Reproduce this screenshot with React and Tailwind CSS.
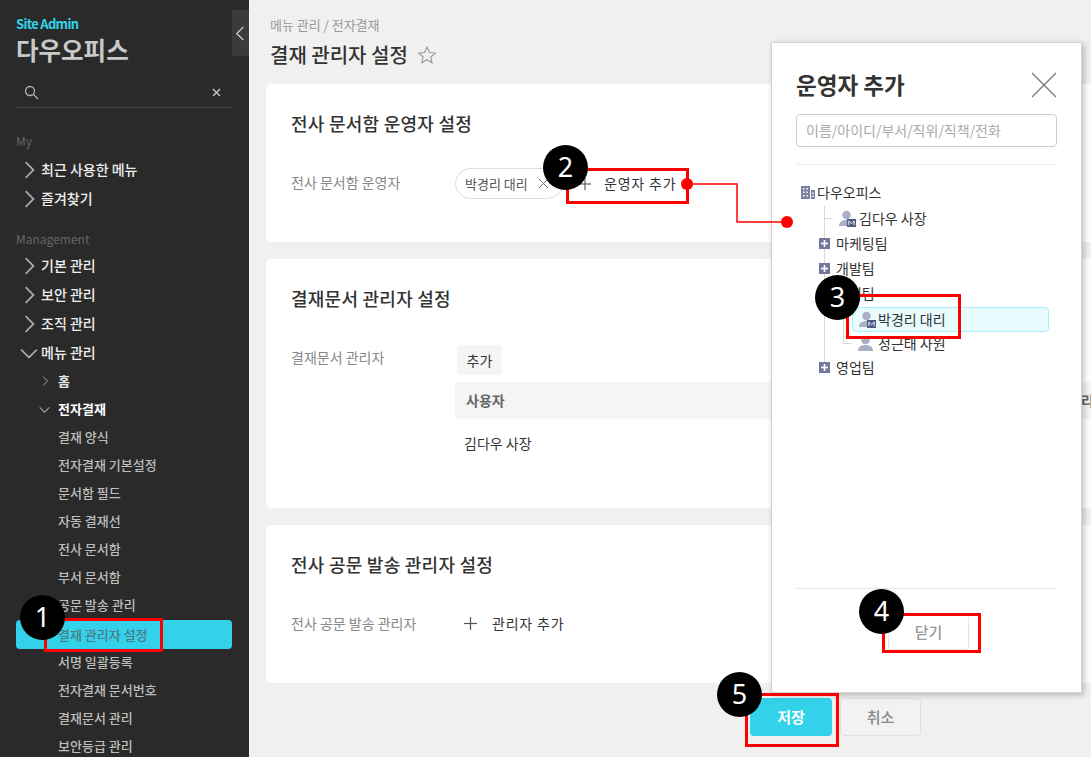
import React from "react";

const FONT = '"Noto Sans CJK KR","Noto Sans",sans-serif';

function Chev({ dir = "right", className = "", size = 16, sw = 1.6 }) {
  const pts = { right: "5,1 12,8 5,15", left: "11,1 4,8 11,15", down: "1,5 8,12 15,5" }[dir];
  return (
    <svg width={size} height={size} viewBox="0 0 16 16" fill="none" stroke="currentColor" strokeWidth={sw} className={className}>
      <polyline points={pts} />
    </svg>
  );
}

function TopItem({ label, open }) {
  return (
    <div className="h-[29px] flex items-center text-[14px] font-medium text-[#eeeeee]">
      <span className="w-[25px] pl-[1px] flex justify-center text-[#a8a8a8]">
        <Chev dir={open ? "down" : "right"} size={18} />
      </span>
      <span>{label}</span>
    </div>
  );
}

function SubItem({ label, active }) {
  return (
    <div className={active
      ? "h-[29px] mt-[1px] -mb-[1px] pl-[42px] w-[216px] rounded-[4px] bg-[#33d2ea] flex items-center text-[13px] font-medium text-[#4e7a85]"
      : "h-[28px] pl-[42px] flex items-center text-[13px] font-medium text-[#bdbdbd]"}>
      {label}
    </div>
  );
}

function Sidebar() {
  const subs = ["결재 양식", "전자결재 기본설정", "문서함 필드", "자동 결재선", "전사 문서함", "부서 문서함", "공문 발송 관리"];
  const subs2 = ["서명 일괄등록", "전자결재 문서번호", "결재문서 관리", "보안등급 관리"];
  return (
    <aside className="relative w-[250px] shrink-0 h-[757px] overflow-hidden bg-[#2a2a2a] pl-[16px] border-r border-[#f7f7f7]">
      <button className="absolute left-[232px] top-[10px] w-[17px] h-[46px] bg-[#3b3b3b] flex items-center justify-center text-[#c8c8c8]">
        <Chev dir="left" size={15} sw={1.4} />
      </button>
      <div className="pt-[14px] h-[20px] box-content text-[13px] leading-[20px] font-bold tracking-[-0.7px] text-[#33d2ea]">Site Admin</div>
      <div className="-mt-[1px] h-[34px] leading-[34px] text-[24.5px] font-bold text-[#c9c9c9]">다우오피스</div>
      <div className="mt-[17px] w-[216px] h-[24px] border-b border-[#484848] relative flex items-center justify-between px-[8px] pb-[6px] text-[#b0b0b0]">
        <svg width="15" height="15" viewBox="0 0 15 15" fill="none" stroke="currentColor" strokeWidth="1.3">
          <circle cx="6" cy="6" r="4.5" />
          <line x1="9.5" y1="9.5" x2="14" y2="14" />
        </svg>
        <svg width="9" height="9" viewBox="0 0 9 9" fill="none" stroke="#d0d0d0" strokeWidth="1.3" className="mr-[3px]">
          <line x1="1" y1="1" x2="8" y2="8" />
          <line x1="8" y1="1" x2="1" y2="8" />
        </svg>
      </div>
      <div className="mt-[24px] h-[18px] leading-[18px] text-[12px] text-[#666666]">My</div>
      <div className="mt-[5px]">
        <TopItem label="최근 사용한 메뉴" />
        <TopItem label="즐겨찾기" />
      </div>
      <div className="mt-[17px] h-[18px] leading-[18px] text-[12px] text-[#666666]">Management</div>
      <div className="mt-[3px]">
        <TopItem label="기본 관리" />
        <TopItem label="보안 관리" />
        <TopItem label="조직 관리" />
        <TopItem label="메뉴 관리" open />
      </div>
      <div>
        <div className="h-[28px] flex items-center text-[13px] font-bold text-[#e8e8e8]">
          <span className="w-[42px] pl-[24px] text-[#a0a0a0]"><Chev dir="right" size={10} /></span>홈
        </div>
        <div className="h-[28px] flex items-center text-[13px] font-bold text-[#ffffff]">
          <span className="w-[42px] pl-[23px] text-[#a0a0a0]"><Chev dir="down" size={11} /></span>전자결재
        </div>
        {subs.map((s) => <SubItem key={s} label={s} />)}
        <SubItem label="결재 관리자 설정" active />
        {subs2.map((s) => <SubItem key={s} label={s} />)}
      </div>
    </aside>
  );
}

function Plus({ size = 13 }) {
  return (
    <svg width={size} height={size} viewBox="0 0 13 13" stroke="#555" strokeWidth="1.2">
      <line x1="6.5" y1="0" x2="6.5" y2="13" />
      <line x1="0" y1="6.5" x2="13" y2="6.5" />
    </svg>
  );
}

function Card({ h, title, children }) {
  return (
    <section className={`w-[900px] bg-white rounded-[5px] pl-[25px] ${h}`}>
      {title}
      {children}
    </section>
  );
}

function Heading({ children }) {
  return <h2 className="pt-[26px] h-[51px] box-content leading-[26px] text-[18px] tracking-[0.25px] font-medium text-[#333333]">{children}</h2>;
}

function Main() {
  return (
    <main className="flex-1 h-[757px] overflow-hidden bg-[#f0f0f0] pl-[16px]">
      <div className="pt-[15px] h-[20px] box-content pl-[4px] leading-[20px] text-[13px] text-[#999999]">메뉴 관리 / 전자결재</div>
      <div className="mt-[6px] h-[28px] pl-[4px] flex items-center gap-[9px]">
        <span className="text-[20px] font-medium text-[#333333]">결재 관리자 설정</span>
        <svg width="20" height="20" viewBox="0 0 24 24" fill="none" stroke="#999" strokeWidth="1.3"><polygon points="12,2.5 14.9,9 22,9.7 16.6,14.4 18.2,21.4 12,17.7 5.8,21.4 7.4,14.4 2,9.7 9.1,9" /></svg>
      </div>
      <div className="mt-[15px] flex flex-col gap-[17px]">
        <Card h="h-[158px]" title={<Heading>전사 문서함 운영자 설정</Heading>}>
          <div className="flex mt-[7px]">
            <div className="w-[164px] pt-[4px] text-[14px] leading-[20px] text-[#888888]">전사 문서함 운영자</div>
            <div className="h-[31px] w-[108px] rounded-full border border-[#dddddd] flex items-center pl-[9px] text-[13px] text-[#555555] gap-[11px]">
              박경리 대리
              <svg width="9" height="9" viewBox="0 0 9 9" stroke="#666" strokeWidth="1" className="shrink-0"><line x1="0" y1="0" x2="9" y2="9" /><line x1="9" y1="0" x2="0" y2="9" /></svg>
            </div>
            <div className="h-[31px] ml-[16px] flex items-center gap-[13px] text-[14px] tracking-[0.8px] text-[#333333]">
              <Plus size={12} />
              운영자 추가
            </div>
          </div>
        </Card>
        <Card h="h-[249px]" title={<Heading>결재문서 관리자 설정</Heading>}>
          <div className="flex mt-[9px]">
            <div className="w-[164px] pt-[2px] text-[14px] leading-[20px] text-[#888888]">결재문서 관리자</div>
            <div className="flex-1">
              <div className="ml-[2px] w-[45px] h-[30px] rounded-[4px] bg-[#f5f5f5] flex items-center justify-center text-[14px] text-[#333333]">추가</div>
              <div className="mt-[7px] h-[37px] bg-[#f5f5f5] flex items-center justify-between pl-[11px] text-[14px] font-bold text-[#666666]">
                <span>사용자</span>
                <span className="mr-[72px]">관리</span>
              </div>
              <div className="h-[48px] pl-[9px] flex items-center text-[14px] text-[#333333]">김다우 사장</div>
            </div>
          </div>
        </Card>
        <Card h="h-[158px]" title={<Heading>전사 공문 발송 관리자 설정</Heading>}>
          <div className="flex mt-[9px]">
            <div className="w-[173px] pt-[2px] text-[14px] leading-[20px] text-[#888888]">전사 공문 발송 관리자</div>
            <div className="h-[24px] flex items-center gap-[15px] text-[14px] tracking-[0.8px] text-[#333333]">
              <Plus size={13} />
              관리자 추가
            </div>
          </div>
        </Card>
      </div>
      <div className="mt-[15px] ml-[484px] flex gap-[8px]">
        <button className="w-[82px] h-[38px] rounded-[4px] bg-[#33d2ea] text-white text-[15px] font-bold">저장</button>
        <button className="w-[81px] h-[38px] rounded-[4px] border border-[#e0e0e0] bg-[#f2f2f2] text-[#888888] text-[15px] font-medium">취소</button>
      </div>
    </main>
  );
}

function PlusBox() {
  return (
    <span className="w-[11px] h-[11px] bg-[#73789a] flex items-center justify-center shrink-0">
      <svg width="7" height="7" viewBox="0 0 7 7" stroke="#fff" strokeWidth="1.6"><line x1="3.5" y1="0" x2="3.5" y2="7" /><line x1="0" y1="3.5" x2="7" y2="3.5" /></svg>
    </span>
  );
}

function Person({ badge }) {
  return (
    <svg width="18" height="17" viewBox="0 0 18 17" className="shrink-0">
      <circle cx="8.5" cy="5" r="4.3" fill="#a9afc4" />
      <path d="M1 16c0-4 3-6 7.5-6s7.5 2 7.5 6z" fill="#a9afc4" />
      {badge && <rect x="9" y="9" width="9" height="8" fill="#4f5a86" />}
      {badge && <path d="M10.8 15.2v-4.2l2.7 2.8 2.7-2.8v4.2" fill="none" stroke="#fff" strokeWidth="0.9" />}
    </svg>
  );
}

function Panel() {
  return (
    <div className="absolute left-[771px] top-[42px] w-[311px] h-[651px] bg-white border border-[#d4d4d4] shadow-[2px_2px_6px_rgba(0,0,0,0.25)] px-[24px] flex flex-col">
      <div className="mt-[27px] mb-[1px] h-[30px] flex items-center justify-between">
        <span className="text-[22.5px] font-bold text-[#333333]">운영자 추가</span>
        <svg width="26" height="26" viewBox="0 0 26 26" stroke="#777" strokeWidth="1.3"><line x1="1" y1="1" x2="25" y2="25" /><line x1="25" y1="1" x2="1" y2="25" /></svg>
      </div>
      <div className="mt-[13px] h-[33px] rounded-[4px] border border-[#cccccc] flex items-center pl-[9px] text-[14px] text-[#aaaaaa]">이름/아이디/부서/직위/직책/전화</div>
      <div className="mt-[17px] border-t border-[#ececec]" />
      <div className="relative pt-[14px] text-[14px] text-[#333333]">
        <div className="absolute left-[28px] top-[41px] w-[1px] h-[156px] bg-[#d8d8d8]" />
        <div className="absolute left-[28px] top-[53px] w-[8px] h-[1px] bg-[#d8d8d8]" />
        <div className="absolute left-[47px] top-[145px] w-[1px] h-[34px] bg-[#d8d8d8]" />
        <div className="absolute left-[47px] top-[178px] w-[9px] h-[1px] bg-[#d8d8d8]" />
        <div className="h-[26px] flex items-center pl-[5px] gap-[2px]">
          <svg width="14" height="14" viewBox="0 0 14 14" className="shrink-0">
            <path d="M0 14V1h9v13z M10 5h4v9h-4z" fill="#7d82a0" />
            <path d="M2 3h1.5v1.5H2zM5.5 3H7v1.5H5.5zM2 6.5h1.5V8H2zM5.5 6.5H7V8H5.5zM2 10h1.5v1.5H2zM5.5 10H7v1.5H5.5zM11.2 7.5h1.5V9h-1.5zM11.2 10.5h1.5V12h-1.5z" fill="#fff" />
          </svg>
          다우오피스
        </div>
        <div className="relative h-[26px] flex items-center pl-[42px] gap-[3px]"><Person badge />김다우 사장</div>
        {["마케팅팀", "개발팀", "기획팀"].map((t) => (
          <div key={t} className="relative h-[25px] flex items-center pl-[23px] gap-[6px]"><PlusBox />{t}</div>
        ))}
        <div className="relative mt-[1px] -mb-[1px] ml-[56px] w-[197px] h-[25px] rounded-[4px] bg-[#e8fbfd] border border-[#a9eef8] flex items-center pl-[5px] gap-[2px]"><Person badge />박경리 대리</div>
        <div className="relative h-[24px] flex items-center pl-[61px] gap-[3px]"><Person />정근태 사원</div>
        <div className="relative h-[25px] flex items-center pl-[23px] gap-[6px]"><PlusBox />영업팀</div>
      </div>
      <div className="mt-auto border-t border-[#e6e6e6] h-[104px] pt-[26px] pl-[4px] flex justify-center">
        <button className="w-[81px] h-[35px] rounded-[3px] border border-[#e4e4e4] text-[15px] font-medium text-[#999999]">닫기</button>
      </div>
    </div>
  );
}

function Box({ cls }) {
  return <div className={`absolute border-[3px] border-[#ff0000] ${cls}`} />;
}

function Num({ n, cls }) {
  return (
    <div className={`absolute w-[45px] h-[45px] rounded-full bg-black text-white flex items-center justify-center text-[27px] ${cls}`} style={{ fontFamily: '"Noto Sans",sans-serif' }}>{n}</div>
  );
}

export default function App() {
  return (
    <div className="relative w-[1091px] h-[757px] overflow-hidden flex" style={{ fontFamily: FONT }}>
      <Sidebar />
      <Main />
      <Panel />
      <Box cls="left-[44px] top-[618px] w-[119px] h-[34px]" />
      <Box cls="left-[566px] top-[168px] w-[123px] h-[36px]" />
      <Box cls="left-[846px] top-[294px] w-[115px] h-[45px]" />
      <Box cls="left-[882px] top-[613px] w-[99px] h-[40px]" />
      <Box cls="left-[745px] top-[693px] w-[94px] h-[54px]" />
      <svg className="absolute left-[680px] top-[178px]" width="115" height="52" viewBox="0 0 115 52" fill="none">
        <polyline points="7,6 57,6 57,44 107,44" stroke="#ff0000" strokeWidth="1.5" />
        <circle cx="7" cy="6" r="6" fill="#ff0000" />
        <circle cx="107" cy="44" r="6" fill="#ff0000" />
      </svg>
      <Num n="1" cls="left-[20px] top-[595px]" />
      <Num n="2" cls="left-[543px] top-[145px]" />
      <Num n="3" cls="left-[815px] top-[275px]" />
      <Num n="4" cls="left-[859px] top-[589px]" />
      <Num n="5" cls="left-[717px] top-[672px]" />
    </div>
  );
}
